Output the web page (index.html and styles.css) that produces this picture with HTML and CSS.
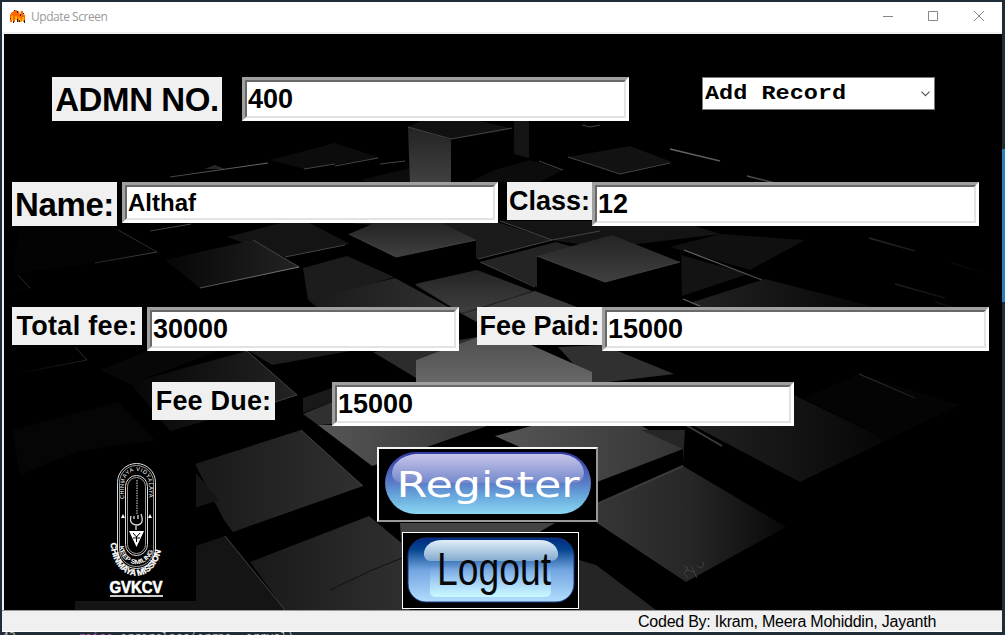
FILE: index.html
```html
<!DOCTYPE html>
<html lang="en">
<head>
<meta charset="utf-8">
<title>Update Screen</title>
<link rel="stylesheet" href="styles.css">
</head>
<body>
<div class="desktop">
  <div class="edge-blue"></div>
  <div class="window">
    <header class="titlebar">
      <svg class="app-icon" width="15" height="13" viewBox="0 0 15 13">
        <path d="M0 5 2 2 4 1V0H7V10L5 9V12H3V8L2 12H0ZM7 2 9 1 10 5 11 1H13V4L15 5V12H13V9L11 12 9 7V12H7Z" fill="#f60"/>
        <path d="M1 6 3 5V9L1 10ZM5 6H7V10H5ZM8 6 11 9 12 12H10ZM12 7H14V11H12Z" fill="#ffb000"/>
        <path d="M0 8H1V9H0ZM4 0H5V1H4ZM7 1H8V3H7ZM3 11H4V13H3ZM7 9H8V12H7ZM10 4H11V6H10ZM14 10H15V13H14ZM9 10H10V12H9ZM13 3H14V4H13Z" fill="#222"/>
      </svg>
      <span class="title">Update Screen</span>
      <svg class="controls" width="104" height="12" viewBox="0 0 104 12" fill="none" stroke="#888">
        <path d="M0 6.500H10M45.500 1.500H54.500V10.500H45.500ZM91 1 101 11M101 1 91 11"/>
      </svg>
    </header>
    <main class="content">
      <svg class="backdrop" viewBox="4 34 998 576" width="998" height="576">
        <defs>
          <linearGradient id="l" x1="0" y1="0" x2="1" y2="0"><stop offset="0" stop-color="#060606"/><stop offset="1" stop-color="#232323"/></linearGradient>
          <linearGradient id="r" x1="0" y1="0" x2="1" y2="0"><stop offset="0" stop-color="#363636"/><stop offset=".5" stop-color="#262626"/><stop offset="1" stop-color="#080808"/></linearGradient>
          <linearGradient id="rd" x1="0" y1="0" x2="1" y2="0"><stop offset="0" stop-color="#222"/><stop offset="1" stop-color="#060606"/></linearGradient>
          <linearGradient id="v" x1="0" y1="0" x2="0" y2="1"><stop offset="0" stop-color="#242424"/><stop offset="1" stop-color="#404040"/></linearGradient>
          <linearGradient id="d" x1="0" y1="0" x2="1" y2="0"><stop offset="0" stop-color="#191919"/><stop offset="1" stop-color="#303030"/></linearGradient>
          <linearGradient id="c" x1="0" y1="0" x2="1" y2="0"><stop offset="0" stop-color="#565656"/><stop offset="1" stop-color="#343434"/></linearGradient>
          <linearGradient id="b" x1="0" y1="0" x2="0" y2="1"><stop offset="0" stop-color="#4c4c4c"/><stop offset="1" stop-color="#686868"/></linearGradient>
          <linearGradient id="fl" x1="0" y1="0" x2="1" y2="0"><stop offset="0" stop-color="#777" stop-opacity="0"/><stop offset="1" stop-color="#777"/></linearGradient>
          <linearGradient id="fr" x1="0" y1="0" x2="1" y2="0"><stop offset="0" stop-color="#666"/><stop offset="1" stop-color="#666" stop-opacity="0"/></linearGradient>
        </defs>
        <rect x="4" y="34" width="998" height="576" fill="#000"/>
        <g fill="#0c0c0c">
          <path d="M270 160 304 169 380 158 335 143Z"/>
          <path d="M360 180 410 168V182H370Z"/>
          <path d="M451 182 530 160 563 170 540 182Z"/>
          <path d="M568 157 620 174 672 162 630 146Z" fill="#121212"/>
          <path d="M514 121H529V158L514 154Z" fill="#151515"/>
        </g>
        <path d="M408 127 451 140 514 129 480 121H420Z" fill="#111"/>
        <path d="M451 140 514 129V160L470 182H451Z"/>
        <path d="M408 127 451 140V184H410Z" fill="url(#v)"/>
        <!-- left-hand tiles -->
        <path d="M20 225 118 228 157 252 95 263 12 274Z" fill="#030303"/>
        <path d="M227 237 300 218 350 244 285 257Z" fill="#141414"/>
        <path d="M165 260 253 240 300 267 200 288Z" fill="url(#l)"/>
        <path d="M303 268 347 256 394 277 330 298 308 300Z" fill="#1c1c1c"/>
        <path d="M308 300 395 278 450 308H318Z" fill="url(#d)"/>
        <path d="M100 370 160 346H232L130 384Z" fill="#070707"/>
        <path d="M130 383 247 351 297 395 170 431Z" fill="url(#l)"/>
        <path d="M249 351H350L272 365Z" fill="#1e1e1e"/>
        <path d="M303 414 332 402V424L318 425Z" fill="#303030"/>
        <path d="M303 398 332 388V402L303 413Z" fill="#191919"/>
        <path d="M12 430 118 402 155 440 77 452 20 475Z" fill="#050505"/>
        <path d="M195 464 301 430 363 486 233 532 224 520Z" fill="url(#d)"/>
        <path d="M195 472 219 500 195 508Z" fill="#151515"/>
        <path d="M195 546 225 536 285 610H75V601H195Z" fill="#141414"/>
        <path d="M250 562 369 516 410 550V610H285Z" fill="url(#d)"/>
        <!-- centre tiles -->
        <path d="M350 223H500L552 240 478 259 430 230Z" fill="#1b1b1b"/>
        <path d="M349 234 396 257 476 240 442 223H375Z" fill="url(#v)"/>
        <path d="M349 234 396 257 476 240V262L413 285 349 252Z"/>
        <path d="M480 262 556 242 600 255 537 287Z" fill="#242424"/>
        <path d="M415 284 477 270 532 291 462 314Z" fill="url(#v)"/>
        <path d="M462 314 535 291 590 312V345L520 345Z" fill="#3a3a3a"/>
        <path d="M500 221H680L720 234 605 248 551 240Z" fill="#141414"/>
        <path d="M537 256 605 282 680 262 612 235Z" fill="url(#v)"/>
        <path d="M537 256 605 282 680 262V300L600 308 537 289Z"/>
        <path d="M373 352 440 343 490 335 416 360V378Z" fill="#2c2c2c"/>
        <path d="M558 347 603 345 674 374 592 384Z" fill="#303030"/>
        <path d="M416 360 497 330 592 372V384H416Z" fill="url(#b)"/>
        <path d="M318 425H490L372 466Z" fill="url(#c)"/>
        <path d="M495 436 535 425H640L683 449 597 482Z" fill="url(#c)"/>
        <path d="M641 430H685L683 464V449Z" fill="#262626"/>
        <path d="M400 523H555L500 555H402Z" fill="#444"/>
        <path d="M597 504 683 466 786 527 686 582 597 523Z" fill="url(#r)"/>
        <path d="M579 560 596 565 656 610H579Z" fill="#252525"/>
        <!-- right-hand tiles -->
        <path d="M670 247 720 234 805 240 750 270Z" fill="#101010"/>
        <path d="M681 255 748 274 682 296Z" fill="#131313"/>
        <path d="M690 303 765 279 875 307H700Z" fill="url(#rd)"/>
        <path d="M692 425 794 395 887 440 800 482Z" fill="url(#rd)"/>
        <path d="M804 398 859 374 960 405 887 440Z" fill="#040404"/>
        <g fill="none" stroke="#444" stroke-width="1">
          <path d="M408 127 451 139 512 128M335 166 378 158M568 157 620 174 670 163M539 161 563 170M380 164 405 161M582 125 590 127 600 125"/>
          <path d="M304 169 335 164M349 234 396 257 476 240M478 259 552 240M480 262 535 287M537 256 605 282 680 262M500 221 552 240 600 231"/>
          <path d="M253 240 299 267M285 257 345 245M232 350 247 351 297 395 275 402M301 430 363 486M225 536 285 610"/>
          <path d="M535 291 462 313 416 285M18 275 30 288M75 347 87 360M118 230 157 252" stroke="#2b2b2b"/>
          <path d="M330 590 370 571 402 558" stroke="#111"/>
          <path d="M597 504 683 466M686 425 722 446" stroke="#3b3b3b" stroke-width="2"/>
        </g>
        <g fill="none" stroke="url(#fl)"><path d="M200 288 299 267M95 263 157 252M8 293 30 288M20 373 87 360M170 177 268 163M150 231 191 224"/></g>
        <g fill="none" stroke="url(#fr)" stroke-width="1.300"><path d="M747 176 775 183M869 238 915 251M951 263 995 276M895 284 945 298M935 302 958 309M684 250 762 280M859 374 915 398M683 299 700 306M670 149 720 161"/></g>
        <path d="M204 169 215 165 225 169Z" fill="#262626"/>
        <path d="M684 566 688 568 684 573 688 578M686 570 695 572M692 567 697 578M697 566C704 571 704 564 703 562" fill="none" stroke="#484848" stroke-width=".8"/>
      </svg>

      <div class="form">
        <div class="row row-admission">
          <label class="label label-large label-admission">ADMN NO.</label>
          <div class="entry entry-admission">400</div>
          <div class="combo"><span class="combo-text">Add Record</span>
            <svg width="9" height="6" viewBox="0 0 9 6" fill="none" stroke="#555" stroke-width="1.200"><path d="M.5.7 4.500 4.700 8.500.7"/></svg>
          </div>
        </div>
        <div class="row row-name">
          <label class="label label-large label-name">Name:</label>
          <div class="entry entry-name">Althaf</div>
          <label class="label label-class">Class:</label>
          <div class="entry entry-class">12</div>
        </div>
        <div class="row row-fee">
          <label class="label label-total">Total fee:</label>
          <div class="entry entry-total">30000</div>
          <label class="label label-paid">Fee Paid:</label>
          <div class="entry entry-paid">15000</div>
        </div>
        <div class="row row-due">
          <label class="label label-due">Fee Due:</label>
          <div class="entry entry-due">15000</div>
        </div>
        <div class="bottom">
          <svg class="school-logo" width="119" height="149" viewBox="77 452 119 149">
            <rect x="77" y="452" width="119" height="149" fill="#000"/>
            <g fill="none" stroke="#ddd">
              <rect x="117.500" y="463.500" width="38" height="105" rx="19"/>
              <rect x="119.500" y="465.500" width="34" height="101" rx="17" stroke-width=".7"/>
              <rect x="125.500" y="475.500" width="22" height="80" rx="11"/>
              <rect x="127.500" y="477.500" width="18" height="76" rx="9" stroke-width=".7"/>
              <path d="M137 480V515" stroke-dasharray="1.500 1"/>
              <path d="M131 516C129 524 134 525 138 525 143 524 143 519 141 514M134 519V516M138 519V515M136 525V530" stroke-width="1.300"/>
            </g>
            <path d="M129 531H144L136.500 547Z" fill="#fff"/>
            <path d="M133 533 136.500 537 140 533M133 538H140M136.500 536V542" stroke="#000" fill="none"/>
            <path d="M121 518 123 514 125 518ZM148 518 150 514 152 518Z" fill="#fff"/>
            <path id="arc-top" d="M124.500 499V483A12 12 0 0 1 148.500 483V501" fill="none"/>
            <path id="arc-smile" d="M119.500 546A17 18 0 0 0 153.500 546" fill="none"/>
            <path id="arc-mission" d="M110.500 543C114 587 159 587 162.500 541" fill="none"/>
            <g fill="#fff" class="logo-text">
              <text font-size="5.500" textLength="68"><textPath href="#arc-top">CHINMAYA VIDYALAYA</textPath></text>
              <text font-size="6.500" font-weight="bold" textLength="50" lengthAdjust="spacingAndGlyphs"><textPath href="#arc-smile">KEEP SMILING</textPath></text>
              <text font-size="8.500" font-weight="bold" textLength="84" lengthAdjust="spacingAndGlyphs" stroke="#fff" stroke-width=".3"><textPath href="#arc-mission">CHINMAYA MISSION</textPath></text>
              <text x="109.500" y="593" font-size="16" font-weight="bold" textLength="53" lengthAdjust="spacingAndGlyphs" stroke="#fff" stroke-width=".6">GVKCV</text>
            </g>
            <path d="M110 596H163" stroke="#ccc" stroke-width="2"/>
          </svg>
          <div class="buttons">
            <button class="image-button register" type="button">
              <svg width="217" height="71" viewBox="379 449 217 71">
                <defs><linearGradient id="rg" x1="0" y1="0" x2="0" y2="1"><stop offset="0" stop-color="#3038a4"/><stop offset=".48" stop-color="#5879c5"/><stop offset=".72" stop-color="#69a9dd"/><stop offset="1" stop-color="#8bd6f4"/></linearGradient>
                <linearGradient id="rs" x1="0" y1="0" x2="0" y2="1"><stop offset="0" stop-color="#c8c5e9"/><stop offset="1" stop-color="#7489cc"/></linearGradient></defs>
                <rect x="385" y="452" width="206" height="62" rx="31" fill="url(#rg)"/>
                <path d="M392 474C392 462 404 454 419 454H559C574 454 584 463 584 474Q583 483 572 483H404Q393 483 392 474Z" fill="url(#rs)"/>
                <text x="396.500" y="497" font-size="36" textLength="183" lengthAdjust="spacingAndGlyphs" class="register-text">Register</text>
              </svg>
            </button>
            <button class="image-button logout" type="button">
              <svg width="175" height="75" viewBox="403 533 175 75">
                <defs><linearGradient id="lg" x1="0" y1="0" x2="0" y2="1"><stop offset="0" stop-color="#002a80"/><stop offset=".18" stop-color="#06458f"/><stop offset=".5" stop-color="#72a4df"/><stop offset="1" stop-color="#b3deff"/></linearGradient>
                <linearGradient id="ls" x1="0" y1="0" x2="0" y2="1"><stop offset="0" stop-color="#e2eff9"/><stop offset="1" stop-color="#82aad0"/></linearGradient>
                <linearGradient id="lb" x1="0" y1="0" x2="0" y2="1"><stop offset="0" stop-color="#a9d5ff" stop-opacity="0"/><stop offset="1" stop-color="#c9f8ff"/></linearGradient></defs>
                <rect x="408" y="538" width="166" height="64" rx="18" fill="url(#lg)" stroke="#163483"/>
                <rect x="430" y="566" width="121" height="31" rx="5" fill="url(#lb)"/>
                <path d="M424 555C423 547 431 540 442 540H540C551 540 559 547 558 556Q557 561 549 561H431Q425 561 424 555Z" fill="url(#ls)"/>
                <text x="437" y="584.500" font-size="46" textLength="114" lengthAdjust="spacingAndGlyphs" class="logout-text">Logout</text>
              </svg>
            </button>
          </div>
        </div>
      </div>
    </main>
    <footer class="statusbar">Coded By: Ikram, Meera Mohiddin, Jayanth</footer>
  </div>
  <div class="code-line"><span class="line-number">43</span><span class="keyword">raise</span> errorclass(errno, errval)</div>
</div>
</body>
</html>
```
FILE: styles.css
```css
* { box-sizing: border-box; }
body { margin: 0; font-family: "Liberation Sans", Arial, sans-serif; }
svg { display: block; }
.desktop { position: relative; width: 1005px; height: 635px; padding: 2px; overflow: hidden; background: #202d37; }
.edge-blue { position: absolute; left: 1002px; top: 149px; width: 3px; height: 153px; background: #2a82b9; }
.window { width: 1000px; height: 630px; display: flex; flex-direction: column; background: #f0f0f0; }
.titlebar { height: 30px; display: flex; align-items: center; padding: 0 0 2px 9px; background: #fff; }
.app-icon { margin-left: -1px; }
.title { flex: 1; margin-left: 6px; padding-top: 1px; color: #999; font: 12px "Open Sans", sans-serif; letter-spacing: -0.450px; }
.controls { margin-right: 15px; }
.content { position: relative; width: 998px; height: 576px; margin: 2px 0 0 2px; overflow: hidden; }
.backdrop { position: absolute; inset: 0; }
.form { position: relative; display: flex; flex-direction: column; padding-top: 43px; }
.row { display: flex; align-items: flex-start; }
.row-admission { height: 105px; padding-left: 48px; }
.row-name { height: 125px; padding-left: 8px; }
.row-fee { height: 75px; padding-left: 8px; }
.row-due { height: 65px; padding-left: 148px; }
.label { height: 38px; line-height: 38px; background: #f0f0f0; color: #000; font-size: 27px; font-weight: bold; text-align: center; white-space: nowrap; }
.label-large { height: 44px; line-height: 45px; font-size: 33px; letter-spacing: -0.400px; }
.label-admission { width: 170px; }
.label-name { width: 105px; }
.label-class { width: 85px; margin-left: 9px; }
.label-total { width: 130px; letter-spacing: 0.300px; }
.label-paid { width: 125px; margin-left: 18px; }
.label-due { width: 123px; letter-spacing: 0.200px; }
.entry { position: relative; height: 44px; padding-left: 1px; border: 5px solid; border-color: #a0a0a0 #fff #fff #a0a0a0; background: #fff; font-size: 27px; font-weight: bold; line-height: 34px; }
.entry::before { content: ""; position: absolute; inset: -2px; border: 2px solid; border-color: #696969 #e3e3e3 #e3e3e3 #696969; }
.entry-admission { width: 387px; margin-left: 20px; }
.entry-name { width: 376px; height: 41px; margin-left: 5px; font-size: 24px; line-height: 31px; }
.entry-class { width: 387px; }
.entry-total { width: 312px; margin-left: 5px; }
.entry-paid { width: 387px; }
.entry-due { width: 462px; margin-left: 57px; }
.combo { width: 233px; height: 33px; margin-left: 73px; padding: 0 4px 0 2px; display: flex; justify-content: space-between; align-items: center; border: 1px solid #7a7a7a; background: #fff; font: bold 21px "Courier New", "Liberation Mono", monospace; }
.combo-text { transform: scaleX(1.12); transform-origin: left; }
.bottom { display: flex; align-items: flex-start; padding-left: 73px; }
.school-logo { margin-top: 5px; }
.logo-text { font-family: "Liberation Sans", Arial, sans-serif; }
.buttons { margin-left: 181px; display: flex; flex-direction: column; gap: 10px; }
.image-button { padding: 0; background: #000; }
.register { width: 221px; height: 75px; border: 2px solid; border-color: #f4f4f4 #999 #999 #f4f4f4; }
.logout { width: 177px; height: 77px; margin-left: 25px; border: 1px solid #fff; }
.register-text { font-family: "DejaVu Sans", sans-serif; fill: #fff; }
.logout-text { font-family: "Liberation Sans", Arial, sans-serif; fill: #080808; }
.statusbar { height: 22px; padding-left: 636px; border-top: 1px solid #999; border-bottom: 1px solid #fff; font-size: 16px; line-height: 21px; letter-spacing: -0.240px; white-space: nowrap; }
.code-line { position: absolute; left: 0; top: 632px; width: 1000px; height: 3px; padding-left: 78px; overflow: hidden; color: #bbb; font: 11.600px/11px "DejaVu Sans Mono", monospace; white-space: nowrap; }
.line-number { position: absolute; left: 2px; }
.keyword { color: #b455b6; }
```
